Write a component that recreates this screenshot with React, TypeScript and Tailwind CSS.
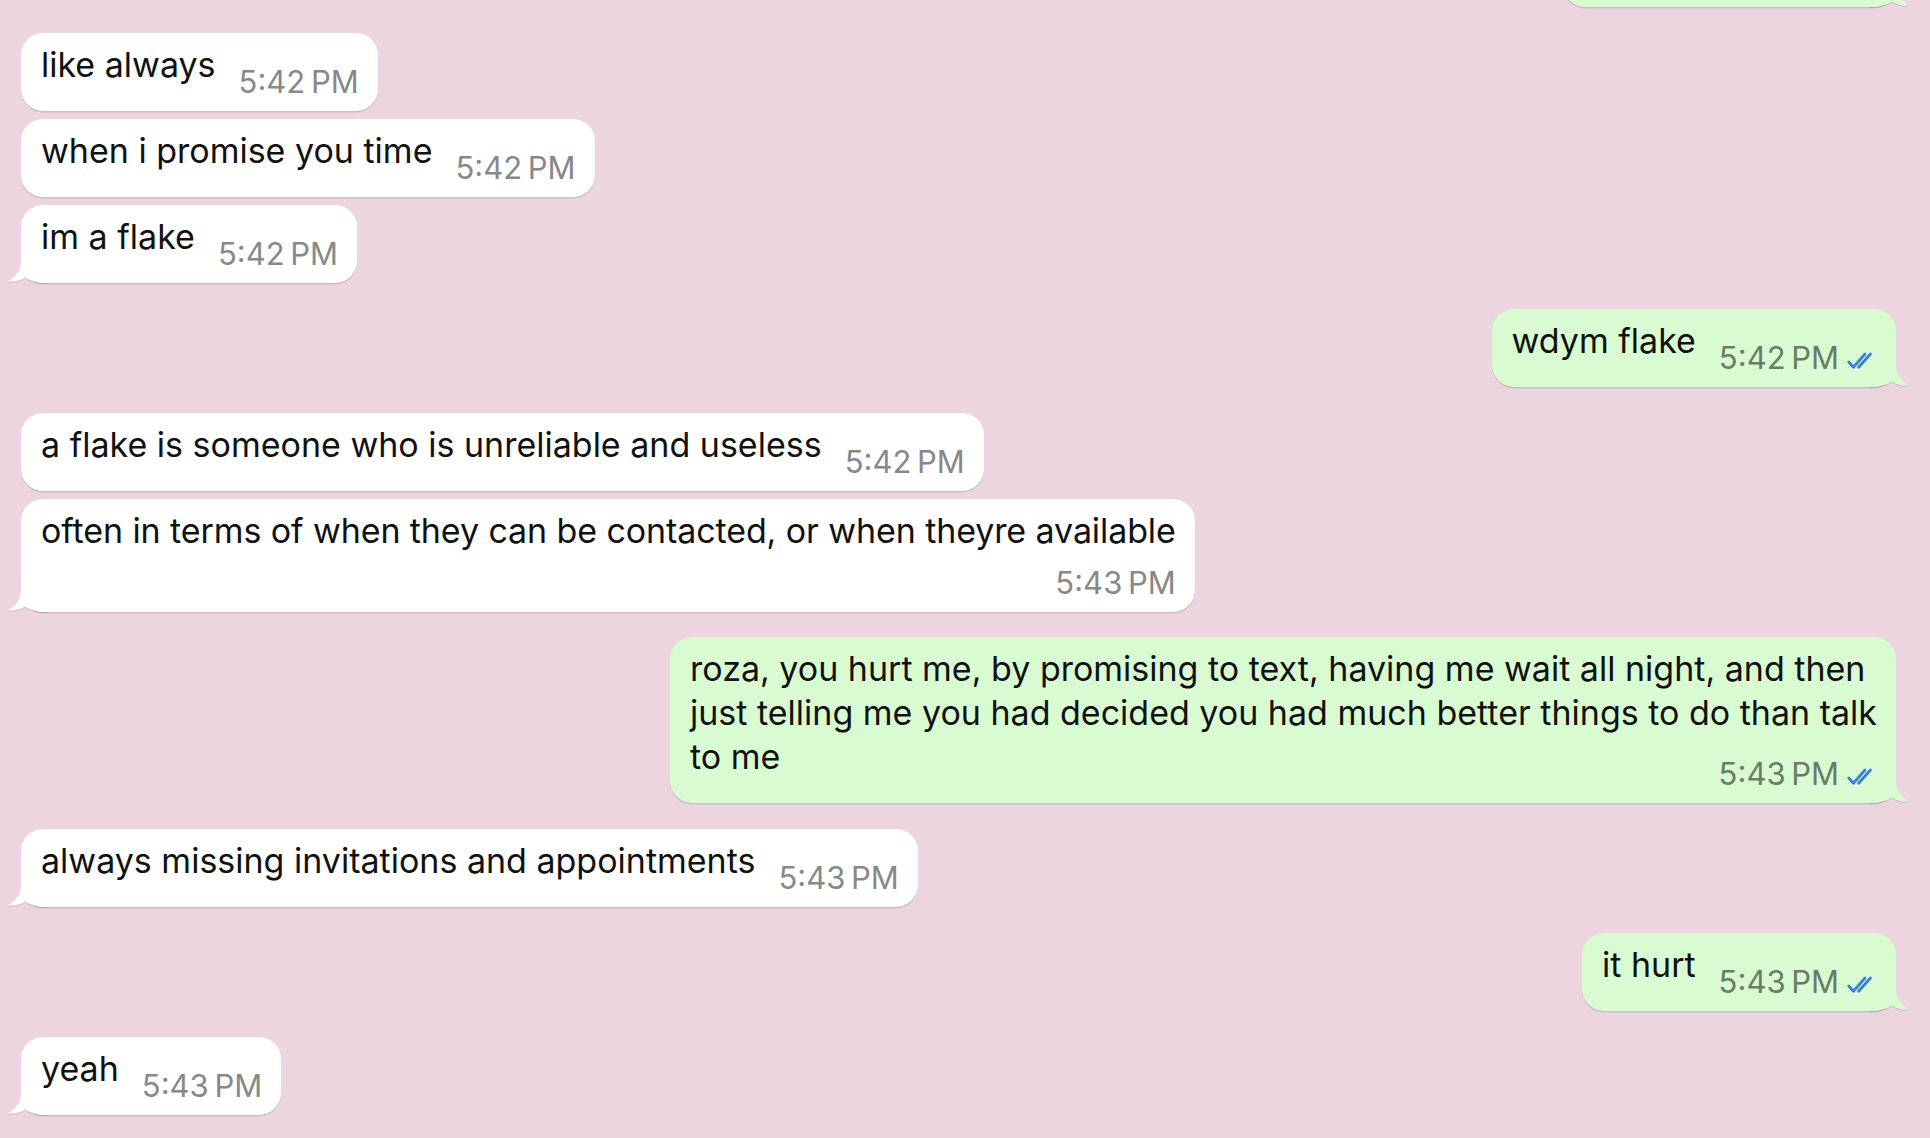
import React from "react";

interface Msg {
    out?: boolean
    lines: string[]
    time: string
    tail?: boolean
    timeBelow?: boolean
    gap: string
}

const messages: Msg[] = [
    { lines: ["like always"], time: "5:42\u202FPM", gap: "mt-[26px]" },
    { lines: ["when i promise you time"], time: "5:42\u202FPM", gap: "mt-[8px]" },
    { lines: ["im a flake"], time: "5:42\u202FPM", tail: true, gap: "mt-[8px]" },
    { out: true, lines: ["wdym flake"], time: "5:42\u202FPM", tail: true, gap: "mt-[26px]" },
    { lines: ["a flake is someone who is unreliable and useless"], time: "5:42\u202FPM", gap: "mt-[26px]" },
    { lines: ["often in terms of when they can be contacted, or when theyre available"], time: "5:43\u202FPM", tail: true, timeBelow: true, gap: "mt-[8px]" },
    {
        out: true,
        lines: [
            "roza, you hurt me, by promising to text, having me wait all night, and then",
            "just telling me you had decided you had much better things to do than talk",
            "to me",
        ],
        time: "5:43\u202FPM",
        tail: true,
        gap: "mt-[25px]",
    },
    { lines: ["always missing invitations and appointments"], time: "5:43\u202FPM", tail: true, gap: "mt-[26px]" },
    { out: true, lines: ["it hurt"], time: "5:43\u202FPM", tail: true, gap: "mt-[26px]" },
    { lines: ["yeah"], time: "5:43\u202FPM", tail: true, gap: "mt-[26px]" },
]

const Checks = () => (
    <svg width="30" height="18" viewBox="0 0 30 18" fill="none" className="mt-[5px] shrink-0">
        <path d="M1.8 10 L6.5 15.2 L18 2" stroke="#3b7ddd" strokeWidth="2.8" strokeLinecap="round" strokeLinejoin="round" />
        <path d="M11.5 15.2 L23.5 2" stroke="#3b7ddd" strokeWidth="2.8" strokeLinecap="round" />
    </svg>
)

const Tail = ({ out }: { out?: boolean }) => {
    if (out) {
        return (
            <svg width="40" height="28" viewBox="0 0 40 28" className="absolute bottom-0 -right-[13px] drop-shadow-[0_1.5px_0.5px_rgba(0,0,0,0.12)]">
                <path d="M27 0 L27 6 C27 16 32 22 40 26 C34 27.5 28 26 23 22.5 C18 26 11 28 0 28 L0 0 Z" fill="#d9fbd1" />
            </svg>
        )
    }
    return (
        <svg width="40" height="28" viewBox="0 0 40 28" className="absolute bottom-0 -left-[13px] drop-shadow-[0_1.5px_0.5px_rgba(0,0,0,0.12)]">
            <path d="M13 0 L13 6 C13 16 8 22 0 26 C6 27.5 12 26 17 22.5 C22 26 29 28 40 28 L40 0 Z" fill="#ffffff" />
        </svg>
    )
}

const Time = ({ msg }: { msg: Msg }) => (
    <div className="flex items-center gap-[8px] shrink-0">
        <span className={`text-[31px] leading-[36px] whitespace-nowrap ${msg.out ? "text-[#687d66]" : "text-[#888888]"}`}>
            {msg.time}
        </span>
        {msg.out && <Checks />}
    </div>
)

const Bubble = ({ msg }: { msg: Msg }) => {
    const head = msg.lines.slice(0, -1)
    const last = msg.lines[msg.lines.length - 1]

    return (
        <div className={`flex ${msg.out ? "justify-end" : "justify-start"} ${msg.gap}`}>
            <div
                className={`relative rounded-[22px] pl-[20px] pr-[19px] pt-[10px] pb-[11px] shadow-[0_1.5px_0.5px_rgba(0,0,0,0.12)] ${msg.out ? "bg-[#d9fbd1]" : "bg-white"}`}
            >
                {msg.tail && <Tail out={msg.out} />}
                <div className="relative">
                    {head.map((line, index) => (
                        <div key={index} className="leading-[44px] whitespace-nowrap">{line}</div>
                    ))}
                    {
                        msg.timeBelow ? (
                            <>
                                <div className="leading-[44px] whitespace-nowrap tracking-[-0.1px]">{last}</div>
                                <div className="flex justify-end mt-[12px]">
                                    <Time msg={msg} />
                                </div>
                            </>
                        ) : (
                            <div className="flex items-end justify-between gap-[23px]">
                                <span className="leading-[44px] whitespace-nowrap mb-[13px]">{last}</span>
                                <Time msg={msg} />
                            </div>
                        )
                    }
                </div>
            </div>
        </div>
    )
}

export default function App() {
    return (
        <div className="w-[1930px] h-[1138px] overflow-hidden bg-[#ecd5df] font-['Inter',sans-serif] text-[34px] text-[#111111]">
            <div className="flex flex-col pl-[21px] pr-[34px]">
                {/* bottom of the previous outgoing message, scrolled off the top */}
                <div className="flex justify-end -mt-[71px]">
                    <div className="relative w-[333px] h-[78px] rounded-[22px] bg-[#d9fbd1] shadow-[0_1.5px_0.5px_rgba(0,0,0,0.12)]">
                        <Tail out />
                    </div>
                </div>
                {messages.map((msg, index) => (
                    <Bubble key={index} msg={msg} />
                ))}
            </div>
        </div>
    )
}
